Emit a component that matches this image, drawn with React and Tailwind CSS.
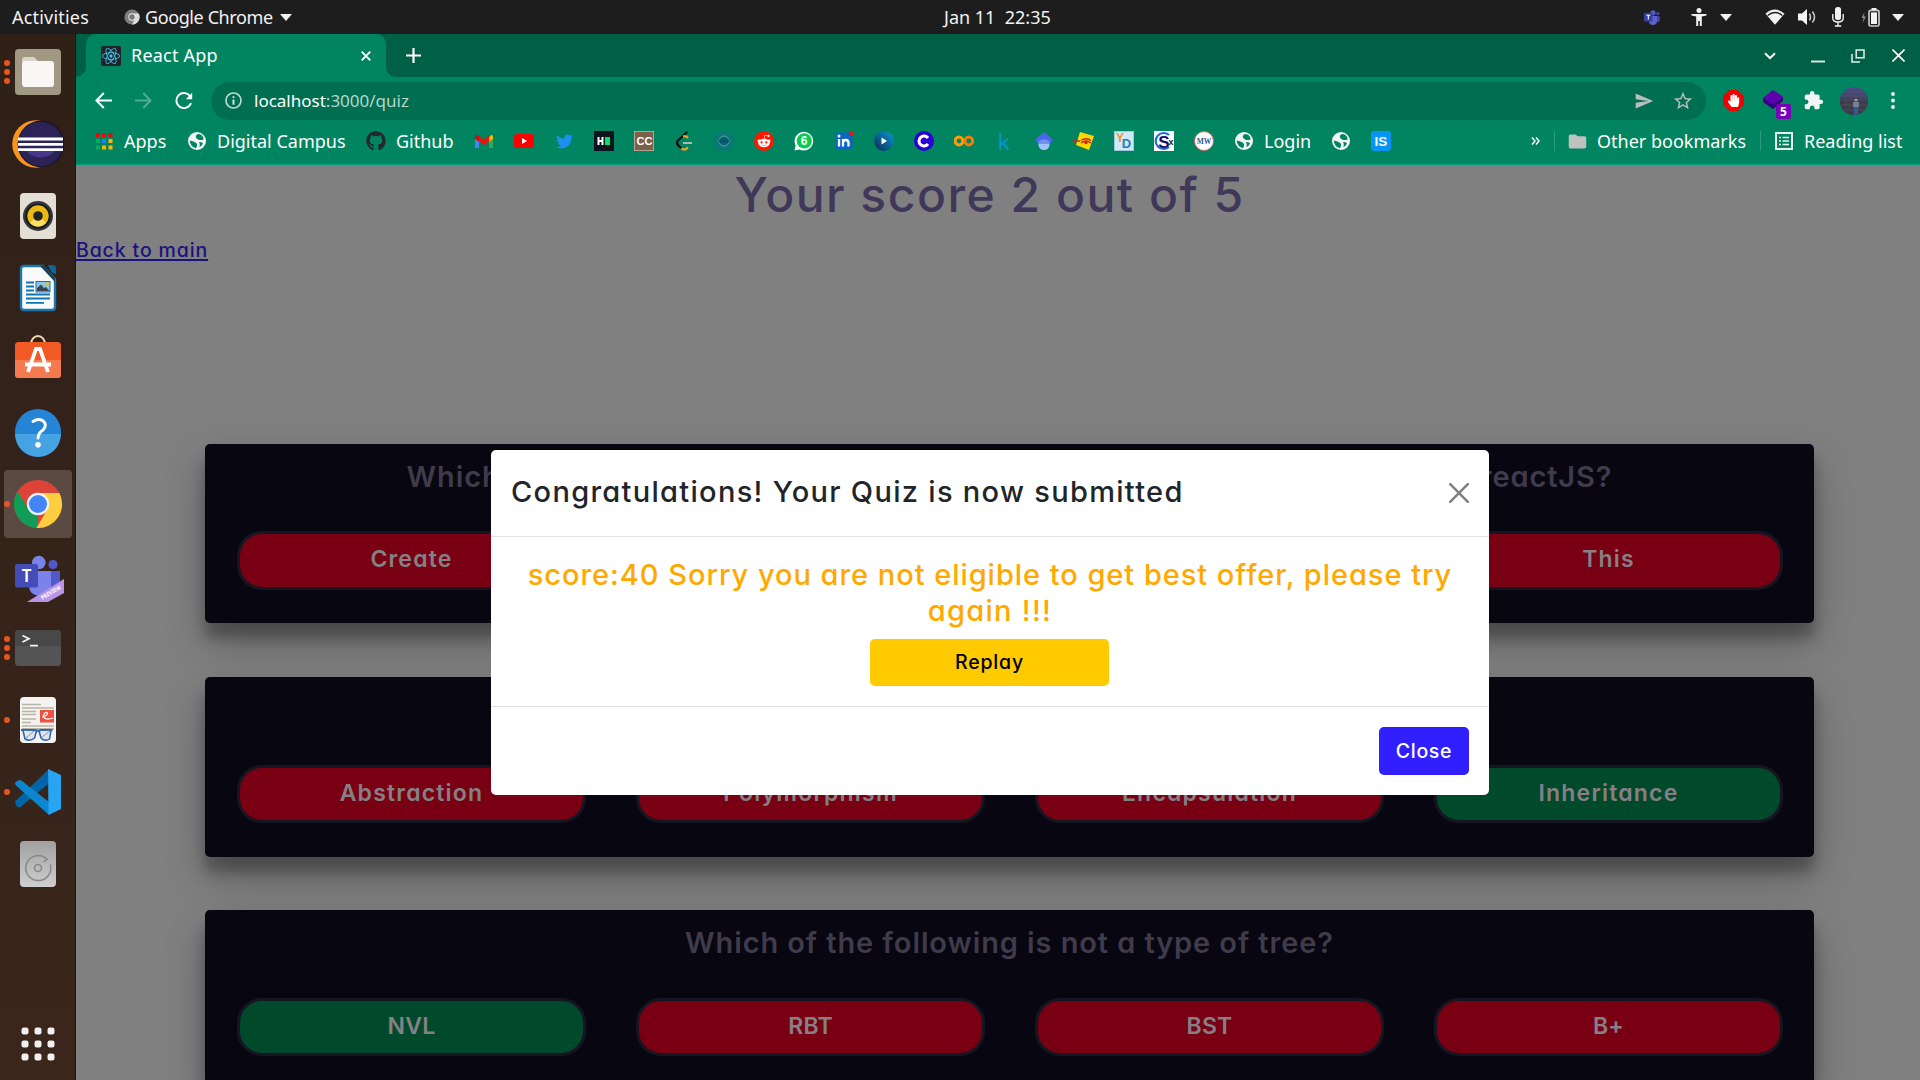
import React from "react";
import { FaGithub, FaTwitter, FaRedditAlien, FaHandPaper } from "react-icons/fa";
import { SiReact } from "react-icons/si";
import { MdExtension, MdStarBorder, MdSend, MdFolder } from "react-icons/md";

const UI = "font-['Noto_Sans','Open_Sans',sans-serif]";
const PAGE = "font-['Inter',sans-serif] [font-feature-settings:'cv11'] font-medium";

/* ---------- top bar ---------- */

function Triangle({ className = "" }) {
  return (
    <svg className={className} width="12" height="7" viewBox="0 0 12 7">
      <path d="M0 0H12L6 7Z" fill="#f2f2f2" />
    </svg>
  );
}

function TopBar() {
  return (
    <header className="relative flex h-[34px] shrink-0 items-center bg-[#1d1d1d] text-[#f2f2f2]">
      <span className="ml-3 w-[112px] whitespace-nowrap text-[18px] leading-[34px] tracking-[0.200px]">Activities</span>
      <svg width="16" height="16" viewBox="0 0 16 16">
        <circle cx="8" cy="8" r="7.6" fill="#7d7d7d" />
        <path d="M8 4.5H14.8A7.6 7.6 0 0 1 8 15.6L11 9.8Z" fill="#dcdcdc" />
        <circle cx="8" cy="8" r="3.7" fill="#e8e8e8" />
        <circle cx="8" cy="8" r="2.7" fill="#777" />
      </svg>
      <span className="ml-[5px] w-[135px] whitespace-nowrap text-[18px] leading-[34px] tracking-[-0.400px]">Google Chrome</span>
      <Triangle />
      <div className="absolute inset-y-0 left-[944px] whitespace-pre text-[18px] leading-[34px]">{"Jan 11  22:35"}</div>
      <div className="ml-auto flex h-full items-center">
        <svg width="16" height="15" viewBox="0 0 16 15">
          <circle cx="9" cy="2.8" r="2.6" fill="#5059c9" />
          <circle cx="13.8" cy="3.6" r="1.7" fill="#4048a8" />
          <rect x="11" y="6" width="5" height="6" rx="2" fill="#3f47a6" />
          <path d="M5 6H13V11A4 4 0 0 1 5 11Z" fill="#5b62cf" />
          <rect x="0" y="3" width="8.5" height="8.5" rx="1" fill="#383fa0" />
          <path d="M2.4 5.2H6.2M4.3 5.2V9.6" stroke="#fff" strokeWidth="1.1" />
        </svg>
        <svg className="ml-[31px]" width="16" height="18" viewBox="0 0 16 18" fill="#f2f2f2">
          <circle cx="8" cy="2.5" r="2.5" />
          <path d="M0.5 6H15.5V7.6L10.8 8.6V18H8.8V13H7.2V18H5.2V8.6L0.5 7.6Z" />
        </svg>
        <Triangle className="ml-[13px]" />
        <svg className="ml-[33px]" width="20" height="16" viewBox="0 0 20 16">
          <path d="M0.5 4.8Q10 -3.6 19.5 4.8L10 15.8Z" fill="#f2f2f2" />
          <path d="M2.6 6.4Q10 0.6 17.4 6.4" fill="none" stroke="#1d1d1d" strokeWidth="1.3" />
        </svg>
        <svg className="ml-[13px]" width="18" height="16" viewBox="0 0 18 16">
          <path d="M0 4.5H4L9 0V16L4 11.5H0Z" fill="#f2f2f2" />
          <path d="M11.5 4.6Q13.4 8 11.5 11.4M14.4 2.4Q18.6 8 14.4 13.6" fill="none" stroke="#c9c9c9" strokeWidth="1.6" />
        </svg>
        <svg className="ml-[16px]" width="12" height="20" viewBox="0 0 12 20">
          <rect x="3" y="0" width="6" height="13" rx="2.5" fill="#f2f2f2" />
          <path d="M0.8 7V11Q0.8 15 6 15Q11.2 15 11.2 11V7M6 15V19M2.8 19H9.2" fill="none" stroke="#f2f2f2" strokeWidth="1.4" />
        </svg>
        <svg className="ml-[17px]" width="19" height="19" viewBox="0 0 19 19">
          <path d="M3.5 4L0.5 10H2.5L1.6 15L5 8.5H2.8Z" fill="#8a8a8a" />
          <rect x="8" y="2.4" width="10" height="15.6" rx="1.6" fill="none" stroke="#c9c9c9" strokeWidth="1.7" />
          <rect x="10" y="4.4" width="6" height="11.6" fill="#f2f2f2" />
          <rect x="10.5" y="0" width="5" height="2" fill="#f2f2f2" />
        </svg>
        <Triangle className="ml-[12px] mr-4" />
      </div>
    </header>
  );
}

/* ---------- dock ---------- */

function Cell({ dots = 0, active = false, children }) {
  return (
    <div className="relative h-[72px] w-[76px] shrink-0">
      <svg width="76" height="72" viewBox="0 0 76 72">
        {active && <rect x="4" y="2" width="68" height="68" rx="4" fill="#5a4a41" />}
        {dots === 1 && <circle cx="7" cy="36" r="3" fill="#e95420" />}
        {dots === 3 && [27, 36, 45].map((y) => <circle key={y} cx="7" cy={y} r="3" fill="#e95420" />)}
        {children}
      </svg>
    </div>
  );
}

function Dock() {
  return (
    <aside className="flex w-[76px] shrink-0 flex-col border-r border-[#1f1611] bg-gradient-to-b from-[#2f2018] to-[#3a261b] pt-[2px]">
      <Cell dots={3}>
        <rect x="15" y="13" width="46" height="46" rx="4" fill="#a09883" />
        <path d="M22 24Q22 21 25 21H34L38 25H50Q54 25 54 28V47Q54 51 50 51H26Q22 51 22 47Z" fill="#dad5ca" />
        <rect x="22" y="25" width="32" height="26" rx="3.5" fill="#f8f7f5" />
      </Cell>
      <Cell>
        <circle cx="36" cy="36" r="23.8" fill="#f7941e" />
        <circle cx="41" cy="36" r="23.4" fill="#16132b" />
        <circle cx="40.7" cy="36" r="22.3" fill="#2c2255" />
        <path d="M26 42H55A15 10 0 0 1 26 42Z" fill="#473788" />
        <path d="M18 31H63M18 36.3H63M18 41.6H63" stroke="#fff" strokeWidth="2.8" />
      </Cell>
      <Cell>
        <rect x="20" y="13" width="36" height="46" rx="4" fill="#e3dfd5" />
        <circle cx="38" cy="36" r="15" fill="#32363d" />
        <circle cx="38" cy="36" r="12.6" fill="#15181f" />
        <circle cx="38" cy="36" r="10.7" fill="#ecb912" />
        <path d="M30 43A10.7 10.7 0 0 0 46 43L41 38H35Z" fill="#ffdf62" />
        <circle cx="38" cy="36" r="4.8" fill="#202225" />
      </Cell>
      <Cell>
        <path d="M24 14H43L55 27V55Q55 58 52 58H24Q21 58 21 55V17Q21 14 24 14Z" fill="#fafafa" stroke="#1b77ab" strokeWidth="2.4" />
        <path d="M48 13H53Q56 13 56 16V22Q51 22 48 13Z" fill="#0b669c" />
        <path d="M40 14L55 30V26L44 13Z" fill="#1d3f57" />
        <path d="M26 30.5H34M26 34.5H34M26 38.5H34M26 42.5H50M26 46.5H50M26 50.8H44" stroke="#0f75b0" strokeWidth="1.8" />
        <rect x="36" y="29.5" width="14" height="10.5" fill="#8cc8ec" stroke="#0f75b0" />
        <path d="M37 39V36L41 32.5L44 36L46 35L49.5 39Z" fill="#3b464c" />
        <circle cx="47.5" cy="32" r="1.8" fill="#e3c02c" />
      </Cell>
      <Cell>
        <path d="M31 20A7 8 0 0 1 45 20" fill="none" stroke="#ecd9b4" strokeWidth="2" />
        <rect x="15" y="18" width="46" height="36" rx="3.5" fill="#f15a24" />
        <path d="M15 36H61V50.5Q61 54 57.5 54H18.5Q15 54 15 50.5Z" fill="#f47b4f" />
        <path d="M28 48L36 25H40L48 48M25 40.5H51" fill="none" stroke="#fff" strokeWidth="3.8" />
      </Cell>
      <Cell>
        <circle cx="38" cy="36" r="23" fill="#2484d6" />
        <path d="M15 38H61A23 23 0 0 1 15 38Z" fill="#45a2e3" />
        <path d="M33 25.500Q38 22 42.500 24.500Q48 28.500 43 34Q38 37.500 38 42" fill="none" stroke="#fff" strokeWidth="3" strokeLinecap="round" />
        <circle cx="38" cy="48.8" r="2.8" fill="#fff" />
      </Cell>
      <Cell dots={1} active>
        <circle cx="38" cy="36" r="24" fill="#db4437" />
        <path d="M17.5 23.5L29 42L38 48L37 60A24 24 0 0 1 17.5 23.5Z" fill="#0f9d58" />
        <path d="M38 25H59.4A24 24 0 0 1 36.5 60L47.5 41Z" fill="#ffcd40" />
        <circle cx="38" cy="36" r="11.2" fill="#f1f1f1" />
        <circle cx="38" cy="36" r="9" fill="#4285f4" />
      </Cell>
      <Cell>
        <circle cx="38.8" cy="22.5" r="6.8" fill="#7b83eb" />
        <circle cx="53" cy="24.5" r="4.6" fill="#5059c9" />
        <path d="M48 31H60V44Q60 52 53 52Q48 52 48 46Z" fill="#5059c9" />
        <path d="M29 31H51V46Q51 56 40 56Q29 55 29 46Z" fill="#7b83eb" />
        <rect x="15" y="24" width="23" height="23.5" rx="2" fill="#444cb5" />
        <text x="26.5" y="42" textAnchor="middle" fontSize="17" fontWeight="600" fill="#fff" fontFamily="Noto Sans, sans-serif">T</text>
        <path d="M64 39V53L48 62H27Z" fill="#b795e4" />
        <text transform="translate(42.500 60) rotate(-31)" fontSize="6" fontWeight="700" fill="#fff" fontFamily="Noto Sans, sans-serif" textLength="22" lengthAdjust="spacingAndGlyphs">PREVIEW</text>
      </Cell>
      <Cell dots={3}>
        <rect x="15" y="18" width="46" height="36" rx="3.5" fill="#545454" />
        <path d="M15 34H61V21.5Q61 18 57.5 18H18.5Q15 18 15 21.5Z" fill="#484848" />
        <path d="M22.5 23.5L29 26.7L22.5 30M30 33.6H38" fill="none" stroke="#f4f4f4" strokeWidth="1.7" />
      </Cell>
      <Cell dots={1}>
        <rect x="20" y="13" width="36" height="46" rx="4" fill="#f4f3f1" />
        <path d="M22 20.5H41M22 24H54M22 27.5H36M22 30.5H36M22 35H36M22 38.5H31M22 42H54M22 44.7H54" stroke="#b9b4a6" strokeWidth="1.4" />
        <rect x="40" y="26" width="14" height="12.5" fill="#f0503f" />
        <path d="M42 33Q49 31 47 28.5Q44 28 43.5 32Q45 37 53 34" fill="none" stroke="#fff" strokeWidth="1.2" />
        <path d="M21 46H34.500Q38 47.500 41 46H52.500" fill="none" stroke="#2b63ad" strokeWidth="2" />
        <path d="M23 46.5L25 55Q30 58 34.5 54L36.5 47M51 46.5L49.500 55Q45 58 41 54L39 47" fill="#c8d8ec" fillOpacity="0.5" stroke="#2b63ad" strokeWidth="1.5" />
        <path d="M26 54L34 47M42 53L50 47" stroke="#8d949c" strokeWidth="1" />
      </Cell>
      <Cell dots={1}>
        <path d="M15 45.5L48 14V28L20 51.5Q18 52 16 49Z" fill="#0065a9" />
        <path d="M15.5 26L19.5 24Q20.5 24 22 25L49 46V59L15.5 29Q14.5 27.5 15.500 26Z" fill="#0b86cf" />
        <path d="M48 13L61 19V53L48.5 59Z" fill="#27a5f2" />
      </Cell>
      <Cell>
        <defs>
          <linearGradient id="disk" x1="0" y1="0" x2="0" y2="1">
            <stop offset="0" stopColor="#a0a0a0" />
            <stop offset="1" stopColor="#cfcfcf" />
          </linearGradient>
        </defs>
        <rect x="20" y="13" width="36" height="46" rx="4" fill="url(#disk)" />
        <path d="M50.300 36.500A12.500 12.500 0 1 1 45 29.500L47.200 31.200L43.500 34" fill="none" stroke="#888" strokeWidth="1.5" />
        <circle cx="38" cy="40" r="3.5" fill="none" stroke="#888" strokeWidth="1.6" />
      </Cell>
      <div className="mt-auto">
        <Cell>
          {[23, 36, 49].map((y) => [25, 38, 51].map((x) => (
            <rect key={x + "-" + y} x={x - 3.5} y={y - 3.5} width="7" height="7" rx="2.2" fill="#f1f0ee" />
          )))}
        </Cell>
      </div>
    </aside>
  );
}

/* ---------- browser chrome ---------- */

function TabStrip() {
  return (
    <div className="flex h-[43px] bg-[#006045] text-white">
      <div className="w-[10px] bg-[#008560]"><div className="h-full rounded-br-[10px] bg-[#006045]" /></div>
      <div className="flex w-[300px] items-center rounded-t-[10px] bg-[#008560]">
        <div className="ml-[15px] flex size-5 items-center justify-center rounded-[2px] bg-[#20232a]">
          <SiReact size={18} color="#40c4e6" />
        </div>
        <span className="ml-[10px] w-[230px] whitespace-nowrap text-[18px] leading-[43px] tracking-[0.200px]">React App</span>
        <svg width="10" height="10" viewBox="0 0 10 10"><path d="M0.7 0.7L9.3 9.3M9.3 0.7L0.7 9.3" stroke="#fff" strokeWidth="1.9" /></svg>
      </div>
      <div className="w-[10px] bg-[#008560]"><div className="h-full rounded-bl-[10px] bg-[#006045]" /></div>
      <div className="flex flex-1 items-center">
        <svg className="ml-[10px]" width="15" height="15" viewBox="0 0 15 15"><path d="M7.5 0V15M0 7.5H15" stroke="#fff" strokeWidth="2.2" /></svg>
        <svg className="ml-auto" width="12" height="8" viewBox="0 0 12 8"><path d="M1 1.2L6 6.2L11 1.2" fill="none" stroke="#fff" strokeWidth="2" /></svg>
        <svg className="ml-[35px]" width="14" height="14" viewBox="0 0 14 14"><path d="M0 12.500H14" stroke="#d4e6e0" strokeWidth="2" /></svg>
        <svg className="ml-[26px]" width="14" height="14" viewBox="0 0 14 14"><path d="M5.2 1H13V8.8H5.2ZM1 5V13H9" fill="none" stroke="#e3efeb" strokeWidth="1.5" /></svg>
        <svg className="ml-[27px] mr-[15px]" width="13" height="13" viewBox="0 0 13 13"><path d="M0.5 0.5L12.5 12.5M12.5 0.5L0.5 12.5" stroke="#fff" strokeWidth="1.6" /></svg>
      </div>
    </div>
  );
}

function Toolbar() {
  return (
    <div className="flex h-[47px] items-center bg-[#008560] pl-[19px]">
      <svg width="17" height="17" viewBox="0 0 17 17"><path d="M17 8.5H1.6M8.8 1L1.4 8.5L8.8 16" fill="none" stroke="#fff" strokeWidth="2" /></svg>
      <svg className="ml-[23px]" width="17" height="17" viewBox="0 0 17 17"><path d="M0 8.5H15.4M8.2 1L15.6 8.5L8.2 16" fill="none" stroke="#52ab92" strokeWidth="2" /></svg>
      <svg className="ml-[23px]" width="18" height="18" viewBox="0 0 18 18"><path d="M15.400 4.800A7.500 7.500 0 1 0 16 11" fill="none" stroke="#fff" strokeWidth="1.900" /><path d="M17.200 0.800V7.200H10.800Z" fill="#fff" /></svg>
      <div className="ml-[18px] flex h-[38px] w-[1495px] items-center rounded-full bg-[#006e50] pl-[14px] pr-[12px]">
        <svg width="17" height="17" viewBox="0 0 17 17"><circle cx="8.5" cy="8.5" r="7.5" fill="none" stroke="#bcd9d0" strokeWidth="1.7" /><path d="M8.5 7.4V12.8M8.5 4.2V6" stroke="#d5e8e2" strokeWidth="1.9" /></svg>
        <span className="ml-3 whitespace-nowrap text-[17px] leading-[38px] text-white">localhost<span className="text-[#b4d6cb]">:3000/quiz</span></span>
        <MdSend className="ml-auto" size={20} color="#b9bfbd" />
        <MdStarBorder className="ml-[18px]" size={22} color="#b9bfbd" />
      </div>
      <div className="ml-[17px] flex h-[21px] w-[21px] items-center justify-center bg-[#f40000] [clip-path:polygon(30%_0,70%_0,100%_30%,100%_70%,70%_100%,30%_100%,0_70%,0_30%)]">
        <FaHandPaper size={13} color="#fff" />
      </div>
      <div className="relative ml-[19px] h-[24px] w-[28px]">
        <svg width="21" height="22" viewBox="0 0 21 22"><path d="M0 13V9L10 15L20 8V12L10 20Z" fill="#32007a" /><path d="M10 1L20.5 8L10 15.5L0 9Z" fill="#5c00b0" /></svg>
        <span className="absolute bottom-[-6px] right-0 h-[15px] w-[15px] rounded-[2px] bg-[#7a00b8] text-center text-[12px] font-bold leading-[15px] text-white">5</span>
      </div>
      <MdExtension className="ml-[12px]" size={21} color="#f1f3f4" />
      <div className="ml-[16px] h-7 w-7 overflow-hidden rounded-full bg-gradient-to-b from-[#4b4c8c] via-[#3d3f56] to-[#37384a]">
        <svg width="28" height="28" viewBox="0 0 28 28"><path d="M0 12H28V28H0Z" fill="#3d3c49" /><path d="M0 5H28M0 9H28M0 13H28M0 18H28M0 23H28M6 13V18M18 18V23M10 5V9" stroke="#565571" strokeWidth="0.7" /><circle cx="16" cy="13" r="1.5" fill="#b79b92" /><path d="M13 15H19V20H13Z" fill="#75809c" /><path d="M14 20H18V28H14Z" fill="#365a8a" /></svg>
      </div>
      <svg className="ml-[23px]" width="4" height="17" viewBox="0 0 4 17" fill="#f1f3f4"><circle cx="2" cy="2" r="1.9" /><circle cx="2" cy="8.5" r="1.9" /><circle cx="2" cy="15" r="1.9" /></svg>
    </div>
  );
}

function Globe() {
  return (
    <svg width="20" height="20" viewBox="0 0 20 20">
      <circle cx="10" cy="10" r="9" fill="#f1f3f4" />
      <path d="M10 3.5Q7 6 11 8.5Q13.5 9.5 16.5 8.5Q16.5 5 13.5 3.6Q11.5 2.6 10 3.5ZM2.6 9.5Q6 10 8.5 11.5Q11.5 13 9 17.3Q3.5 16 2.6 9.5ZM12 11Q15 10.5 16 12.5Q14.5 15.5 12.5 16Q13.5 13 12 11Z" fill="#008560" />
    </svg>
  );
}

function Icon({ children }) {
  return <svg className="shrink-0" width="20" height="20" viewBox="0 0 20 20">{children}</svg>;
}

const F = { fontFamily: "Liberation Sans, sans-serif", fontWeight: 700, textAnchor: "middle" };

function Bookmarks() {
  const label = "whitespace-nowrap text-[18px] leading-[32px] text-white";
  return (
    <div className="flex h-[34px] items-center bg-[#008560] pl-[18px]">
      <div className="flex items-center gap-5">
        <div className="flex items-center gap-[10px]">
          <Icon>
            {[["#f00", 2, 2], ["#f00", 8, 2], ["#f00", 14.5, 2], ["#00b060", 2, 8], ["#1a82ff", 8, 8], ["#ffb400", 14.5, 8], ["#00b060", 2, 14.5], ["#ffb400", 8, 14.5], ["#ffb400", 14.5, 14.5]].map(([c, x, y]) => (
              <rect key={x + "-" + y} x={x} y={y} width="4" height="4" fill={c} />
            ))}
          </Icon>
          <span className={label + " w-[43px]"}>Apps</span>
        </div>
        <div className="flex items-center gap-[10px]"><Globe /><span className={label + " w-[129px]"}>Digital Campus</span></div>
        <div className="flex items-center gap-[10px]"><FaGithub size={20} color="#24292f" /><span className={label + " w-[58px]"}>Github</span></div>
        <Icon>
          <path d="M1 5V17H5V9.5Z" fill="#4285f4" /><path d="M19 5V17H15V9.5Z" fill="#34a853" />
          <path d="M2.5 5.5L10 11.5L17.5 5.5" fill="none" stroke="#e6140a" strokeWidth="4.2" /><path d="M15 6.5L17 4Q19 3.5 19 6V8L15 10.5Z" fill="#fbbc04" /><path d="M1 8V6Q1 3.5 3.5 4L5 5.5V10.5Z" fill="#d40b0b" />
        </Icon>
        <Icon><rect x="0" y="3" width="20" height="14" rx="3" fill="#f00" /><path d="M8 7L13 10L8 13Z" fill="#fff" /></Icon>
        <span className="flex w-5 justify-center"><FaTwitter size={17} color="#1d8ff0" /></span>
        <Icon><rect width="20" height="20" fill="#0e141e" /><path d="M4.5 6V14M8.5 6V14M4.5 10H8.5" stroke="#fff" strokeWidth="2" /><rect x="11" y="6" width="5" height="8" fill="#05e06a" /></Icon>
        <Icon><rect width="20" height="20" fill="#7c604a" stroke="#c6b9a9" strokeWidth="1.5" /><text x="10.5" y="14" fontSize="11" fill="#fff" {...F}>CC</text></Icon>
        <Icon><path d="M12.500 1.5L4 9.5Q2 12 4 14L6.5 16.5" fill="none" stroke="#0b0b0b" strokeWidth="2.3" strokeLinecap="round" /><path d="M7.5 17.5Q10.5 20 14 16.500M9 5.5Q11.5 4.5 14 7" fill="none" stroke="#ffa116" strokeWidth="2.2" /><path d="M9 12H18" stroke="#b3b3b3" strokeWidth="2" /></Icon>
        <Icon><circle cx="10" cy="10" r="9" fill="#087c72" stroke="#0a7481" strokeWidth="1.5" /><circle cx="10" cy="10" r="5" fill="#0d5f76" stroke="#5fa7a0" /><path d="M5 10H15" stroke="#06556a" strokeWidth="3" /></Icon>
        <span className="flex size-5 items-center justify-center rounded-full bg-[#fb1a00]"><FaRedditAlien size={14} color="#fff" /></span>
        <Icon><path d="M0.5 19.5L1.6 14.5A9.3 9.3 0 1 1 5.5 18.4Z" fill="#fff" /><circle cx="10.3" cy="9.8" r="7.6" fill="#0acb52" /><text x="10.2" y="14" fontSize="12" fill="#fff" {...F}>6</text></Icon>
        <Icon><rect x="1.500" y="1.500" width="17" height="17" rx="1.500" fill="#0a66c2" /><path d="M5 8V15.500M9 8V15.500M9 12Q9 9 11.800 9Q14.500 9 14.500 12V15.500" fill="none" stroke="#fff" strokeWidth="2.300" /><circle cx="5" cy="5" r="1.500" fill="#fff" /><circle cx="17.500" cy="2.700" r="2.500" fill="#f01414" /></Icon>
        <Icon><defs><linearGradient id="pl" x1="0" y1="1" x2="1" y2="0"><stop offset="0" stopColor="#07284f" /><stop offset="1" stopColor="#0e9bd8" /></linearGradient></defs><circle cx="10" cy="10" r="10" fill="url(#pl)" /><path d="M7.5 6.5L13 10L7.5 13.5Z" fill="#fff" /></Icon>
        <Icon><circle cx="10" cy="10" r="10" fill="#2a00d4" /><path d="M14 7A5 5 0 1 0 14 13" fill="none" stroke="#fff" strokeWidth="3" /></Icon>
        <Icon><circle cx="5" cy="10" r="3.9" fill="none" stroke="#ff9d00" strokeWidth="3" /><circle cx="14.8" cy="10" r="3.9" fill="none" stroke="#f57c00" strokeWidth="3" /></Icon>
        <Icon><path d="M6.2 2V19M14 8L6.500 14M9 12L14.5 19" fill="none" stroke="#0098d8" strokeWidth="1.9" /></Icon>
        <Icon><circle cx="10" cy="13.5" r="5.5" fill="#a0c3ff" /><path d="M10 1L0.5 9L4.5 12.5Q10 6.5 15.5 12.5L19.5 9Z" fill="#4a67e8" /><path d="M4.5 10.5Q10 6 15.5 10.5V13H4.5Z" fill="#6f90f3" /></Icon>
        <Icon><path d="M6 1L20 5L15 19L2 14Z" fill="#ffd800" /><path d="M1 8V12M0 10H6M7 12Q12 8 17 12M7 9.5Q12 6 17 9.5" fill="none" stroke="#c92b10" strokeWidth="1.5" /><circle cx="12" cy="11.5" r="1.8" fill="#c92b10" /></Icon>
        <Icon><rect x="0.5" y="0.5" width="19" height="19" fill="#cfe9f7" stroke="#9cc7dc" /><text x="6" y="10.5" fontSize="12" fill="#f7941d" {...F}>Y</text><text x="12.5" y="17" fontSize="13" fill="#1e7ec2" {...F}>D</text></Icon>
        <Icon><rect width="20" height="20" fill="#fff" /><path d="M15 4A8 8 0 1 0 15 16" fill="none" stroke="#1e6fd6" strokeWidth="2.2" /><text x="10" y="16.5" fontSize="17" fill="#160c6c" {...F}>S</text><text x="17" y="14" fontSize="9" fill="#222" {...F}>x</text></Icon>
        <Icon><circle cx="10" cy="10" r="9.5" fill="#fff" stroke="#d46a62" /><text x="10" y="12.7" fontSize="7.5" fill="#2b5a94" textAnchor="middle" fontWeight="700" fontFamily="Liberation Serif, serif">MW</text></Icon>
        <div className="flex items-center gap-[10px]"><Globe /><span className={label + " w-[47px]"}>Login</span></div>
        <Globe />
        <Icon><rect width="20" height="20" rx="3" fill="#0894f5" /><text x="10" y="14.8" fontSize="13.5" fill="#fff" {...F}>IS</text></Icon>
      </div>
      <svg className="ml-auto" width="9" height="8" viewBox="0 0 9 8"><path d="M1 0.5L4 4L1 7.5M5 0.5L8 4L5 7.5" fill="none" stroke="#fff" strokeWidth="1.4" /></svg>
      <div className="ml-[14px] h-5 w-px bg-[#2c9a7c]" />
      <MdFolder className="ml-[12px]" size={21} color="#bdc1c0" />
      <span className={label + " ml-[9px] w-[150px]"}>Other bookmarks</span>
      <div className="ml-[13px] h-5 w-px bg-[#2c9a7c]" />
      <svg className="ml-[14px]" width="18" height="18" viewBox="0 0 18 18"><rect x="1" y="1" width="16" height="16" fill="none" stroke="#e6f1ee" strokeWidth="2" /><path d="M4 5.5H6M4 9H6M4 12.5H6M7.5 5.5H14M7.5 9H14M7.5 12.5H14" stroke="#e6f1ee" strokeWidth="1.5" /></svg>
      <span className={label + " ml-[11px] w-[116px]"}>Reading list</span>
    </div>
  );
}

/* ---------- quiz page ---------- */

const RED = "bg-[#780012]";
const GREEN = "bg-[#004a2b]";

const cards = [
  {
    title: (
      <span className="flex w-[1206px] justify-between">
        <span>Which</span>
        <span>reactJS?</span>
      </span>
    ),
    size: "h-[179px]",
    head: "h-[87px]",
    cell: "h-[59px]",
    answers: [["Create", RED], ["", RED], ["", RED], ["This", RED]],
  },
  {
    title: null,
    size: "h-[180px]",
    head: "h-[88px]",
    cell: "h-[58px]",
    answers: [["Abstraction", RED], ["Polymorphism", RED], ["Encapsulation", RED], ["Inheritance", GREEN]],
  },
  {
    title: "Which of the following is not a type of tree?",
    size: "h-[180px]",
    head: "h-[88px]",
    cell: "h-[58px]",
    answers: [["NVL", GREEN], ["RBT", RED], ["BST", RED], ["B+", RED]],
  },
];

function Card({ title, answers, size, head, cell }) {
  return (
    <section className={"w-[1609px] shrink-0 rounded-[5px] bg-[#070611] shadow-[0_19px_38px_rgba(0,0,0,0.3),0_15px_12px_rgba(0,0,0,0.22)] " + size}>
      <h2 className={"flex justify-center whitespace-nowrap pt-[15px] text-[29px] font-semibold leading-[36px] tracking-[0.900px] text-[#3f3b4b] " + head}>
        {title}
      </h2>
      <div className="flex gap-[50px] pl-[32px]">
        {answers.map(([text, color], i) => (
          <div key={i} className={"w-[349px] rounded-[25px] border-[3px] border-[#161623] text-center text-[23px] font-semibold leading-[50px] text-[#868086] " + cell + " " + color + (text.length > 3 ? " tracking-[1.200px]" : " tracking-[0.200px]")}>
            {text}
          </div>
        ))}
      </div>
    </section>
  );
}

function Modal() {
  return (
    <div className="h-[345px] w-[998px] rounded-[5px] bg-white">
      <div className="flex h-[87px] items-start justify-between border-b border-[#dee2e6] px-5 pt-6">
        <h4 className="whitespace-nowrap text-[29px] leading-[36px] tracking-[1.300px] text-[#212529]">Congratulations! Your Quiz is now submitted</h4>
        <svg className="mt-[9px]" width="20" height="20" viewBox="0 0 20 20"><path d="M1.2 1.2L18.8 18.8M18.8 1.2L1.2 18.8" stroke="#7f7f7f" strokeWidth="2.5" strokeLinecap="round" /></svg>
      </div>
      <div className="flex h-[170px] flex-col items-center border-b border-[#dee2e6] pt-5 text-[29px] leading-[36px] text-[#ffa900]">
        <span className="whitespace-nowrap tracking-[0.960px]">score:40 Sorry you are not eligible to get best offer, please try</span>
        <span className="whitespace-nowrap tracking-[1.300px]">again !!!</span>
        <button className="mr-px mt-[10px] h-[47px] w-[239px] rounded-[5px] bg-[#ffca00] text-[19.500px] leading-[45px] tracking-[0.800px] text-black">Replay</button>
      </div>
      <div className="flex justify-end px-5 pt-5">
        <button className="h-[48px] w-[90px] rounded-[5px] bg-[#321fff] text-[19.500px] leading-[48px] tracking-[0.700px] text-white">Close</button>
      </div>
    </div>
  );
}

function Page() {
  return (
    <main className={"relative flex flex-1 flex-col overflow-hidden bg-[#808080] " + PAGE}>
      <h1 className="w-[1827px] shrink-0 whitespace-nowrap text-center text-[48px] leading-[59px] tracking-[1.500px] text-[#403858]">Your score 2 out of 5</h1>
      <a className="mt-[11px] w-fit shrink-0 whitespace-nowrap text-[19.500px] leading-[30px] tracking-[0.870px] text-[#1b1280] underline decoration-2 underline-offset-2">Back to main</a>
      <div className="ml-[129px] mt-[179px] flex flex-col gap-[53px]">
        <div className="mb-px"><Card {...cards[0]} /></div>
        <Card {...cards[1]} />
        <Card {...cards[2]} />
      </div>
      <div className="absolute inset-x-0 top-0 pl-[415px] pt-[285px]"><Modal /></div>
    </main>
  );
}

export default function App() {
  return (
    <div className={"flex h-[1080px] w-[1920px] flex-col overflow-hidden " + UI}>
      <TopBar />
      <div className="flex min-h-0 flex-1">
        <Dock />
        <div className="flex min-w-0 flex-1 flex-col">
          <TabStrip />
          <Toolbar />
          <Bookmarks />
          <div className="h-[7px] border-b border-[#009f7c] bg-[#008560]" />
          <Page />
        </div>
      </div>
    </div>
  );
}
